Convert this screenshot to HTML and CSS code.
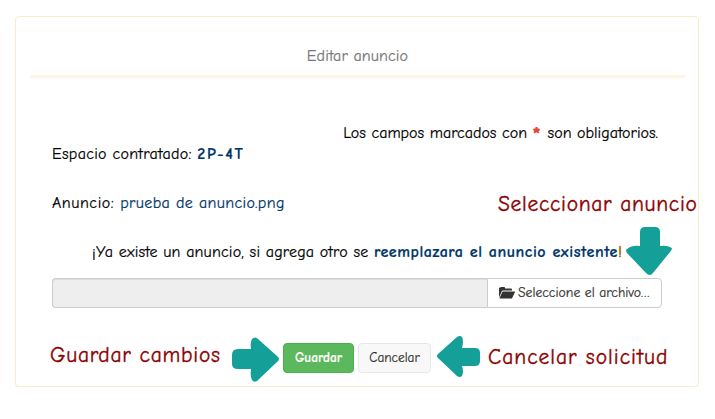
FILE: index.html
```html
<!DOCTYPE html>
<html lang="es">
<head>
<meta charset="utf-8">
<title>Editar anuncio</title>
<link rel="stylesheet" href="styles.css">
</head>
<body>
<main class="card">
  <header class="card-header"><span class="title">Editar anuncio</span></header>
  <form class="form">
    <p class="required"><span>Los campos marcados con <b class="star">*</b> son obligatorios.</span></p>
    <p class="space"><span>Espacio contratado: </span><b class="value">2P-4T</b></p>
    <p class="ad"><span class="ad-label">Anuncio: </span><span class="value">prueba de anuncio.png</span></p>
    <p class="notice"><span>¡Ya existe un anuncio, si agrega otro se </span><b class="value">reemplazara el anuncio existente</b><span class="bang">!</span></p>
    <div class="file">
      <div class="file-name"></div>
      <div class="file-pick">
        <svg class="folder" viewBox="0 0 16 12"><path d="M0 10.5V1.2Q0 .5.7.5H1.5Q1.7 0 2.2 0H5.2Q5.8 0 6 .8V1.5H12Q13 1.5 13 2.5V3.5H4Q3.2 3.5 2.8 4.2Z"/><path d="M4 4.5H15.5Q16.2 4.5 15.9 5.2L13.2 11Q12.9 11.5 12.3 11.5H1Q.3 11.5.7 10.8L3.3 5Q3.5 4.5 4 4.5Z"/></svg>
        <span>Seleccione el archivo<span class="dots">...</span></span>
      </div>
    </div>
    <div class="actions">
      <button type="button" class="btn save"><span>Guardar</span></button>
      <button type="button" class="btn cancel"><span>Cancelar</span></button>
    </div>
  </form>
</main>
<div class="note note-select">Seleccionar anuncio</div>
<div class="note note-save">Guardar cambios</div>
<div class="note note-cancel">Cancelar solicitud</div>
<svg class="arrow arrow-down" viewBox="0 0 46 48"><path d="M14 19V5Q14 0 19 0H29Q34 0 34 5V19Q41 18 46 21Q46 23 44 25L27 46Q24 50 20 46L1 26Q-1 23 1 22Q6 18 14 19Z"/></svg>
<svg class="arrow arrow-right" viewBox="0 0 47 45"><path d="M19 12H6Q0 12 0 18V27Q0 32 6 32H19Q18 40 20 43Q22 46 25 44L45 25Q49 22 45 19L26 2Q23-1 20 2Q18 5 19 12Z"/></svg>
<svg class="arrow arrow-left" viewBox="0 0 43 41"><path d="M25 12H38Q43 12 43 17V25Q43 30 38 30H25Q27 36 25 40Q23 42 20 40L1 22Q-1 20 1 18L20 1Q23-1 25 1Q27 5 25 12Z"/></svg>
</body>
</html>
```
FILE: styles.css
```css
* { box-sizing: border-box; }
body {
  margin: 0;
  padding: 16px 16px 0 15px;
  background: #fff;
  color: #000;
  font: 16px/21px "Comic Sans MS", "Comic Neue", "Noto Sans", sans-serif;
  letter-spacing: .12px;
  -webkit-text-stroke: .2px;
}
p { margin: 0; white-space: nowrap; }
p span { white-space: pre; }
.card {
  height: 371px;
  border: 1px solid #faebcc;
  border-radius: 4px;
  box-shadow: 0 1px 1px rgba(0, 0, 0, .05);
  padding: 0 13px 0 14px;
}
.card-header {
  height: 61px;
  padding-top: 29px;
  border-bottom: 3px solid #fcf5e1;
  color: #777;
  text-align: center;
}
.form { padding: 45px 23px 0 22px; }
.required { height: 21px; padding-right: 4px; text-align: right; letter-spacing: 0; }
.required > span { word-spacing: .2px; }
.space { letter-spacing: .28px; }
.space .value { letter-spacing: 1.7px; }
.ad { margin-top: 28px; letter-spacing: .37px; }
.ad-label { letter-spacing: .55px; }
.notice { margin: 28px 0 0 40px; letter-spacing: .17px; }
.notice .value { letter-spacing: .56px; }
.value { color: #003568; }
.star { color: #e0483a; font-size: 21px; line-height: 0; vertical-align: -3px; letter-spacing: 1.5px; -webkit-text-stroke: .6px; }
.bang { color: #a46a00; -webkit-text-stroke: .6px; }
.file { display: flex; height: 30px; margin-top: 15px; }
.file-name {
  flex: 1;
  background: #eee;
  border: 1px solid #ccc;
  border-right: 0;
  border-radius: 4px 0 0 4px;
  box-shadow: inset 0 1px 1px rgba(0, 0, 0, .075);
}
.file-pick {
  display: flex;
  align-items: center;
  gap: 3px;
  width: 175px;
  padding: 0 0 1px 11px;
  border: 1px solid #ccc;
  border-radius: 0 4px 4px 0;
  color: #333;
  font-size: 13.7px;
  letter-spacing: 0;
  white-space: nowrap;
}
.dots { letter-spacing: 1px; }
.folder { width: 16px; height: 12px; fill: #333; }
.actions { display: flex; justify-content: center; gap: 4px; margin-top: 35px; }
.btn {
  height: 30px;
  padding: 0;
  border: 1px solid #e0e0e0;
  border-radius: 4px;
  font: 13.3px/26px "Comic Sans MS", "Comic Neue", "Noto Sans", sans-serif;
  white-space: nowrap;
}
.save { width: 71px; background: #5cb85c; border-color: #4cae4c; color: #fff; font-weight: 600; }
.cancel { width: 73px; background: #f8f8f8; border-color: #e7e7e7; color: #333; }
.note {
  position: absolute;
  color: #8b0000;
  font-size: 21.5px;
  line-height: 28px;
  letter-spacing: .7px;
  white-space: nowrap;
  -webkit-text-stroke: .35px;
}
.note-select { left: 498px; top: 190px; }
.note-save { left: 50px; top: 341px; letter-spacing: .75px; }
.note-cancel { left: 488px; top: 343px; letter-spacing: 1px; }
.arrow { position: absolute; fill: #14a098; }
.arrow-down { left: 626px; top: 227px; width: 46px; height: 48px; }
.arrow-right { left: 232px; top: 337px; width: 47px; height: 45px; }
.arrow-left { left: 437px; top: 336px; width: 43px; height: 41px; }
```
